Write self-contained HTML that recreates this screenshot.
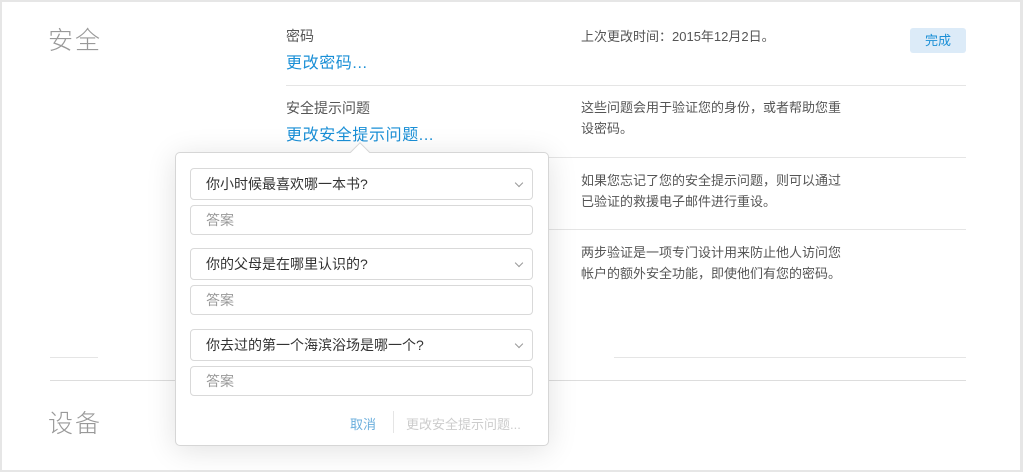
<!DOCTYPE html>
<html><head><meta charset="utf-8"><style>
*{box-sizing:border-box;margin:0;padding:0}
body{width:1023px;height:472px;background:#fff;font-family:"Liberation Sans","Noto Sans CJK SC",sans-serif;position:relative;overflow:hidden;color:#333}
.frame{position:absolute;left:0;top:0;width:1023px;height:472px;border:2px solid #e6e6e6;border-right-width:3px}
.a{position:absolute;white-space:nowrap}
.h{font-size:25px;color:#999;font-weight:300;letter-spacing:2px}
.lab{font-size:14px;color:#555}
.lnk{font-size:16px;color:#1a8fd6;letter-spacing:0.6px}
.desc{font-size:13px;color:#555;line-height:21px}
.ln{position:absolute;height:1px;background:#e5e5e5}
.pop{position:absolute;left:175px;top:152px;width:374px;height:294px;background:#fff;border:1px solid #d6d6d6;border-radius:5px;box-shadow:0 4px 30px rgba(0,0,0,.12)}
.arr{position:absolute;left:177px;top:-8px;width:14px;height:14px;background:#fff;border-left:1px solid #d6d6d6;border-top:1px solid #d6d6d6;transform:rotate(45deg)}
.sel,.inp{position:absolute;left:14px;width:343px;border:1px solid #d9d9d9;border-radius:4px;padding-left:15px;font-size:14px}
.sel{height:32px;line-height:30px;color:#333}
.inp{height:30px;line-height:28px;color:#999}
.sel:after{content:"";position:absolute;right:10px;top:11px;width:5px;height:5px;border-right:1px solid #999;border-bottom:1px solid #999;transform:rotate(45deg)}
</style></head><body>
<div class="frame"></div>
<div class="a h" style="left:48px;top:21px">安全</div>
<div class="a lab" style="left:286px;top:26px">密码</div>
<div class="a lnk" style="left:286px;top:49px">更改密码...</div>
<div class="a desc" style="left:581px;top:26px">上次更改时间：2015年12月2日。</div>
<div class="a" style="left:910px;top:28px;width:56px;height:25px;background:#dcebf8;border-radius:3px;color:#1a8fd6;font-size:13px;line-height:25px;text-align:center">完成</div>
<div class="ln" style="left:286px;top:85px;width:680px"></div>
<div class="a lab" style="left:286px;top:98px">安全提示问题</div>
<div class="a lnk" style="left:286px;top:121px">更改安全提示问题...</div>
<div class="a desc" style="left:581px;top:97px">这些问题会用于验证您的身份，或者帮助您重<br>设密码。</div>
<div class="ln" style="left:548px;top:157px;width:418px"></div>
<div class="a desc" style="left:581px;top:170px">如果您忘记了您的安全提示问题，则可以通过<br>已验证的救援电子邮件进行重设。</div>
<div class="ln" style="left:548px;top:229px;width:418px"></div>
<div class="a desc" style="left:581px;top:242px">两步验证是一项专门设计用来防止他人访问您<br>帐户的额外安全功能，即使他们有您的密码。</div>
<div class="ln" style="left:50px;top:357px;width:48px"></div>
<div class="ln" style="left:614px;top:357px;width:352px"></div>
<div class="ln" style="left:50px;top:380px;width:916px;background:#ddd"></div>
<div class="a h" style="left:48px;top:404px">设备</div>
<div class="pop"><div class="arr"></div>
<div class="sel" style="top:15px">你小时候最喜欢哪一本书?</div>
<div class="inp" style="top:52px">答案</div>
<div class="sel" style="top:95px">你的父母是在哪里认识的?</div>
<div class="inp" style="top:132px">答案</div>
<div class="sel" style="top:176px">你去过的第一个海滨浴场是哪一个?</div>
<div class="inp" style="top:213px">答案</div>
<div class="a" style="left:174px;top:261px;font-size:13px;color:#6aaedc">取消</div>
<div class="a" style="left:217px;top:258px;width:1px;height:22px;background:#e5e5e5"></div>
<div class="a" style="left:230px;top:261px;font-size:13px;color:#ccc">更改安全提示问题...</div>
</div>
</body></html>
